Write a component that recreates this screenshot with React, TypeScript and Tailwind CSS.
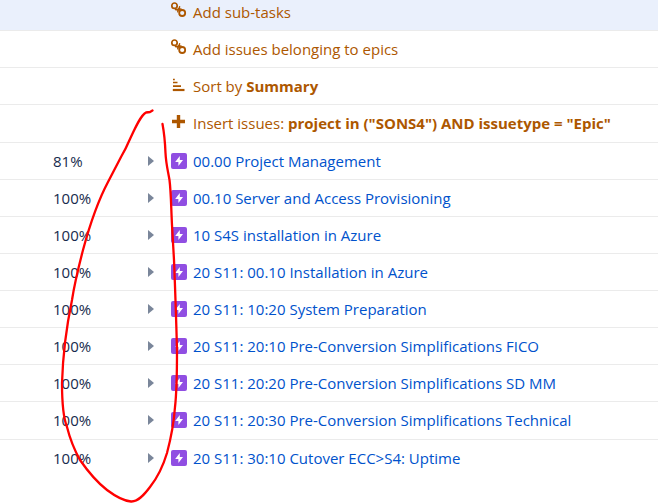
import React from "react";
import clsx from "clsx";

const generators = [
  { icon: "link", label: "Add sub-tasks", value: "", selected: true },
  { icon: "link", label: "Add issues belonging to epics", value: "" },
  { icon: "sort", label: "Sort by ", value: "Summary" },
  {
    icon: "plus",
    label: "Insert issues: ",
    value: 'project in ("SONS4") AND issuetype = "Epic"',
    tall: true,
  },
];

const epics = [
  { progress: "81%", summary: "00.00 Project Management" },
  { progress: "100%", summary: "00.10 Server and Access Provisioning" },
  { progress: "100%", summary: "10 S4S installation in Azure" },
  { progress: "100%", summary: "20 S11: 00.10 Installation in Azure" },
  { progress: "100%", summary: "20 S11: 10:20 System Preparation" },
  {
    progress: "100%",
    summary: "20 S11: 20:10 Pre-Conversion Simplifications FICO",
  },
  {
    progress: "100%",
    summary: "20 S11: 20:20 Pre-Conversion Simplifications SD MM",
  },
  {
    progress: "100%",
    summary: "20 S11: 20:30 Pre-Conversion Simplifications Technical",
    tall: true,
  },
  { progress: "100%", summary: "20 S11: 30:10 Cutover ECC>S4: Uptime" },
];

const GeneratorIcon = ({ name }: { name: string }) => (
  <svg
    className="h-4 w-4 shrink-0 overflow-visible"
    viewBox="0 0 16 16"
    fill="none"
    stroke="currentColor"
    aria-hidden="true"
  >
    {name === "link" && (
      <>
        <circle cx="3.5" cy="3.7" r="2.7" strokeWidth="1.7" />
        <circle cx="11.2" cy="11" r="3" strokeWidth="1.8" />
        <path
          d="M4.500 7.600C6.500 8.200 8.500 7 8.600 4.800M6.800 9.800C6.500 8 8.500 6.500 10.200 7.200"
          strokeWidth="1.5"
          strokeLinecap="round"
        />
      </>
    )}
    {name === "sort" && (
      <>
        <path d="M2 3.5h1.800M2 6.5h4.500M2 10.200h8" strokeWidth="1.7" />
        <path d="M1.800 14h11.700" strokeWidth="2.2" />
      </>
    )}
    {name === "plus" && <path d="M1 8.500h13M7.500 2v13" strokeWidth="3.4" />}
  </svg>
);

const EpicIcon = () => (
  <svg className="mt-0.5 h-4 w-4 shrink-0" viewBox="0 0 16 16" aria-hidden="true">
    <rect width="16" height="16" rx="2" fill="#904ee2" />
    <path d="M8.800 3v4H12L7.400 13V9H4.200z" fill="#fff" />
  </svg>
);

// Hand-drawn marker loop round the progress column
const MarkerLoop = () => (
  <svg
    className="pointer-events-none absolute top-0 left-0 h-[503px] w-[200px]"
    viewBox="0 0 200 503"
    fill="none"
    stroke="#ff0000"
    strokeWidth="2.3"
    strokeLinecap="round"
    strokeLinejoin="round"
    aria-hidden="true"
  >
    <path d="M152.500 110.500L150 112L146 112.500C141 115 136 126 130 139C127 146 124 152 121 157L108 182C99 199 90 224 83 250C77 273 74 287 72 300C67 324 63 350 62 383C62 403 63 417 67 427C70 439 75 451 80 460C89 473 98 483 107 490C115 496 125 501 131 501.500C138 502 144 495 150 487C158 477 164 463 167 453C171 438 174 421 175 407C177 390 177 375 177 350C176 310 175 285 174 260L172 225C171 205 171 192 169.500 180C168 171 166 164 165.500 153C165 141 164 132 162.500 124" />
  </svg>
);

const App = () => {
  return (
    <main className="relative min-h-screen overflow-hidden bg-white font-['Open_Sans','Segoe_UI',sans-serif] text-[15px] leading-5">
      {/* The list is scrolled a little, so its top row is cut */}
      <table className="-mt-1.5 w-full table-fixed border-separate border-spacing-0">
        <colgroup>
          <col className="w-[141px]" />
          <col className="w-[30px]" />
          <col />
        </colgroup>
        <tbody>
          {generators.map(({ icon, label, value, selected, tall }) => (
            <tr
              key={label}
              className={clsx(
                "align-top",
                tall ? "h-[38px]" : "h-[37px]",
                selected && "bg-[#eaf0fc]"
              )}
            >
              <td className="border-b border-[#ebebeb]" />
              <td className="border-b border-[#ebebeb]" />
              <td className="border-b border-[#ebebeb] pt-2 text-[#ad5700]">
                <div className="flex items-start gap-1.5 whitespace-nowrap">
                  <GeneratorIcon name={icon} />
                  <span>
                    {label}
                    {value && <b>{value}</b>}
                  </span>
                </div>
              </td>
            </tr>
          ))}
          {epics.map(({ progress, summary, tall }) => (
            <tr
              key={summary}
              className={clsx(
                "group align-top",
                tall ? "h-[38px]" : "h-[37px]"
              )}
            >
              <td className="border-b border-[#ebebeb] pt-2 pl-[53px] text-[#172b4d] group-last:border-0">
                {progress}
              </td>
              <td className="border-b border-[#ebebeb] pt-2 group-last:border-0">
                <button
                  type="button"
                  aria-label={"Expand " + summary}
                  className="flex h-5 w-5 items-center justify-center text-[#7a869a]"
                >
                  <svg className="h-2.5 w-1.5" viewBox="0 0 6 10">
                    <path d="M0 0 6 5 0 10z" fill="currentColor" />
                  </svg>
                </button>
              </td>
              <td className="border-b border-[#ebebeb] pt-2 group-last:border-0">
                <div className="flex items-start gap-1.5 whitespace-nowrap">
                  <EpicIcon />
                  <a href="#" className="text-[#0052cc]">
                    {summary}
                  </a>
                </div>
              </td>
            </tr>
          ))}
        </tbody>
      </table>
      <MarkerLoop />
    </main>
  );
};

export default App;
